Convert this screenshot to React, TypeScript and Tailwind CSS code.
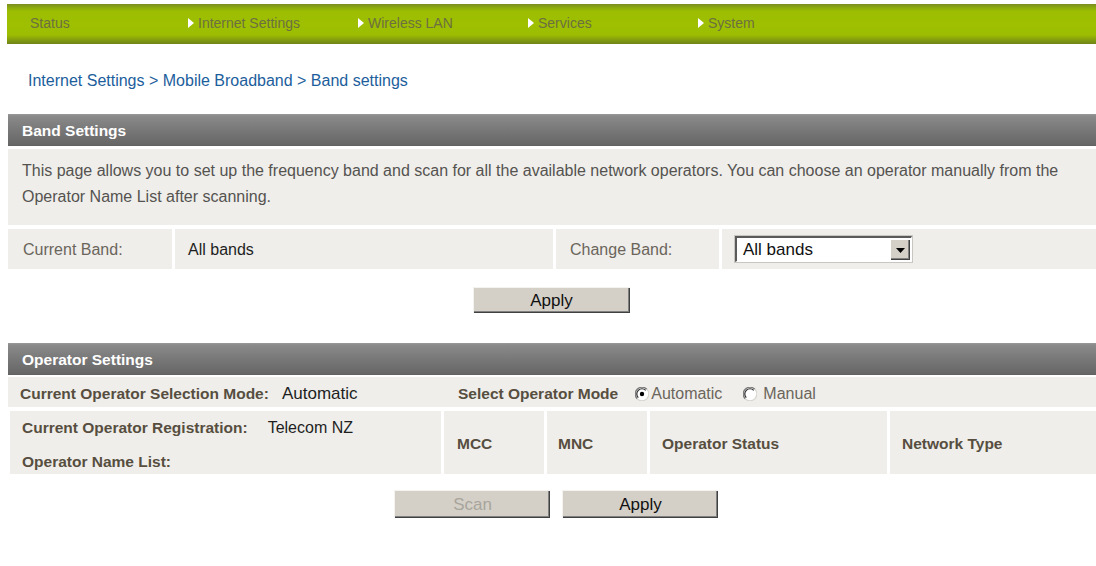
import React from "react";

const NAV = ["Status", "Internet Settings", "Wireless LAN", "Services", "System"];

function NavArrow() {
  return (
    <svg width="6" height="10" viewBox="0 0 6 10" className="shrink-0">
      <path d="M0 0 L6 5 L0 10 Z" fill="#ffffff" />
    </svg>
  );
}

function Radio({ checked }: { checked?: boolean }) {
  return (
    <svg width="14" height="14" viewBox="0 0 14 14" className="shrink-0">
      <circle cx="7" cy="7" r="6.5" fill="#ffffff" />
      <path d="M2.2 11.8 A6.5 6.5 0 0 1 11.8 2.2" stroke="#7a7a7a" strokeWidth="1.3" fill="none" />
      <path d="M3.3 10.7 A5.2 5.2 0 0 1 10.7 3.3" stroke="#2a2a2a" strokeWidth="1.2" fill="none" />
      <path d="M11.8 2.2 A6.5 6.5 0 0 1 2.2 11.8" stroke="#d8d6d0" strokeWidth="1.2" fill="none" />
      {checked && <circle cx="7" cy="7" r="2.2" fill="#000000" />}
    </svg>
  );
}

function ClassicButton({ label, disabled, className }: { label: string; disabled?: boolean; className?: string }) {
  return (
    <div
      className={
        "flex items-center justify-center bg-[#d4d0c8] border-t border-l border-[#f4f3ef] shadow-[inset_-1px_-1px_0_#404040,inset_-2px_-2px_0_#808080] text-[17px] " +
        (disabled ? "text-[#a8a59c] " : "text-[#111111] ") +
        (className ?? "")
      }
    >
      {label}
    </div>
  );
}

function SectionHeader({ title }: { title: string }) {
  return (
    <div className="h-[32px] flex items-center pl-[14px] pt-[1px] bg-[linear-gradient(to_bottom,#9a9a9a_0px,#8a8a8a_2px,#787878_16px,#666666_31px,#5c5c5c_32px)] text-white font-bold text-[15.5px]">
      {title}
    </div>
  );
}

export default function App() {
  return (
    <div className="w-[1096px] h-[566px] bg-white overflow-hidden font-['Liberation_Sans',Arial,sans-serif]">
      {/* top menu bar */}
      <div className="pt-[4px] pl-[7px]">
        <div className="h-[40px] flex bg-[linear-gradient(to_bottom,#7b8c22_0px,#8aa612_3px,#9cbd02_7px,#9ec000_20px,#9cbd02_31px,#88a20c_35px,#6f8419_40px)]">
          {NAV.map((item, i) => (
            <div
              key={item}
              className={
                "w-[170px] flex items-center gap-[4px] pb-[2px] text-[14px] text-[#6d6f40] " +
                (i === 0 ? "pl-[23px]" : "pl-[11px]")
              }
            >
              {i > 0 && <NavArrow />}
              <span>{item}</span>
            </div>
          ))}
        </div>
      </div>

      {/* breadcrumb */}
      <div className="mt-[28px] pl-[28px] text-[16px] leading-[18px] text-[#1c5e9c]">
        Internet Settings &gt; Mobile Broadband &gt; Band settings
      </div>

      <div className="ml-[8px]">
        {/* band settings */}
        <div className="mt-[24px]">
          <SectionHeader title="Band Settings" />
        </div>
        <div className="mt-[3px] h-[76px] bg-[#efeeeb] pl-[14px] pr-[20px] pt-[9px] text-[16px] leading-[26px] text-[#555350]">
          This page allows you to set up the frequency band and scan for all the available network operators. You can choose an operator manually from the Operator Name List after scanning.
        </div>
        <div className="mt-[4px] h-[40px] flex gap-[3px] text-[16px]">
          <div className="w-[164px] bg-[#efeeeb] flex items-center pl-[15px] pt-[2px] text-[#6b655b]">Current Band:</div>
          <div className="w-[378px] bg-[#efeeeb] flex items-center pl-[13px] pt-[2px] text-[#1e1e1e]">All bands</div>
          <div className="w-[163px] bg-[#efeeeb] flex items-center pl-[14px] pt-[2px] text-[#6b655b]">Change Band:</div>
          <div className="flex-1 bg-[#efeeeb] flex items-center pl-[13px]">
            <div className="w-[177px] h-[26px] flex bg-white border-t-2 border-l-2 border-t-[#5a5a5a] border-l-[#5a5a5a] border-b border-r border-b-[#ffffff] border-r-[#ffffff] shadow-[0_0_0_1px_#c8c6c0]">
              <div className="flex-1 flex items-center pl-[6px] text-[17px] text-[#111111]">All bands</div>
              <div className="w-[20px] m-[1px] flex items-center justify-center bg-[#d4d0c8] border-t border-l border-[#ffffff] shadow-[inset_-1px_-1px_0_#404040,inset_-2px_-2px_0_#808080]">
                <svg width="9" height="5" viewBox="0 0 9 5">
                  <path d="M0 0 L9 0 L4.5 5 Z" fill="#000000" />
                </svg>
              </div>
            </div>
          </div>
        </div>
        <div className="mt-[18px] flex justify-center pr-[2px]">
          <ClassicButton label="Apply" className="w-[157px] h-[26px]" />
        </div>

        {/* operator settings */}
        <div className="mt-[30px]">
          <SectionHeader title="Operator Settings" />
        </div>
        <div className="mt-[2px] h-[30px] flex items-center pt-[3px] bg-[#efeeeb] text-[15.5px]">
          <div className="w-[436px] flex items-center pl-[12px]">
            <span className="font-bold text-[#574e3f]">Current Operator Selection Mode:</span>
            <span className="ml-[13px] text-[17px] text-[#1e1e1e]">Automatic</span>
          </div>
          <div className="flex items-center pl-[14px]">
            <span className="font-bold text-[#574e3f]">Select Operator Mode</span>
            <span className="ml-[17px] flex items-center gap-[2px] text-[16px] text-[#6b655b]">
              <Radio checked />
              Automatic
            </span>
            <span className="ml-[21px] flex items-center gap-[6px] text-[16px] text-[#6b655b]">
              <Radio />
              Manual
            </span>
          </div>
        </div>
        <div className="mt-[4px] h-[63px] flex gap-[3px] text-[15.5px] font-bold text-[#574e3f]">
          <div className="w-[431px] ml-[2px] bg-[#efeeeb] flex flex-col justify-between pl-[12px] pt-[7px] pb-[1px]">
            <div className="flex items-center h-[20px]">
              <span>Current Operator Registration:</span>
              <span className="ml-[20px] font-normal text-[16px] text-[#1e1e1e]">Telecom NZ</span>
            </div>
            <div className="flex items-center h-[22px]">Operator Name List:</div>
          </div>
          <div className="w-[100px] bg-[#efeeeb] flex items-center pl-[13px] pt-[3px]">MCC</div>
          <div className="w-[100px] bg-[#efeeeb] flex items-center pl-[11px] pt-[3px]">MNC</div>
          <div className="w-[237px] bg-[#efeeeb] flex items-center pl-[12px] pt-[3px]">Operator Status</div>
          <div className="flex-1 bg-[#efeeeb] flex items-center pl-[12px] pt-[3px]">Network Type</div>
        </div>
        <div className="mt-[16px] flex justify-center gap-[12px] pl-[8px]">
          <ClassicButton label="Scan" disabled className="w-[156px] h-[28px]" />
          <ClassicButton label="Apply" className="w-[156px] h-[28px]" />
        </div>
      </div>
    </div>
  );
}
